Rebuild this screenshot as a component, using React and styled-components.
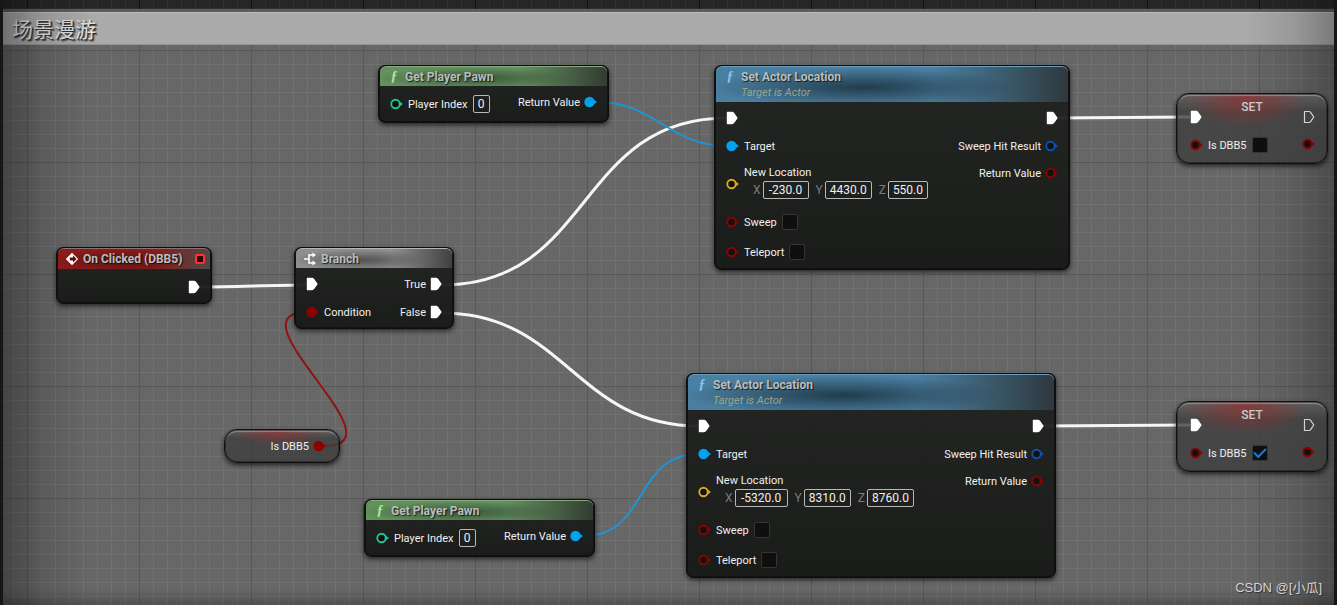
import React from "react";
import styled, { createGlobalStyle, css } from "styled-components";

const GlobalStyle = createGlobalStyle`
  * { box-sizing: border-box; }
  body {
    margin: 0;
    background: #1a1a1a;
    font-family: Roboto, "Noto Sans CJK SC", sans-serif;
  }
`;

const grid = (minor, major, x, y) => css`
  background-image:
    linear-gradient(to right, ${major} 1px, transparent 1px),
    linear-gradient(to bottom, ${major} 1px, transparent 1px),
    linear-gradient(to right, ${minor} 1px, transparent 1px),
    linear-gradient(to bottom, ${minor} 1px, transparent 1px);
  background-size: 112px 112px, 112px 112px, 14px 14px, 14px 14px;
  background-position: ${x}px ${y}px;
`;

const Canvas = styled.main`
  position: relative;
  display: flex;
  flex-direction: column;
  min-height: 100vh;
  padding: 9px 3px 0;
  overflow: hidden;
  background-color: #262626;
  ${grid("#303030", "#121212", 27, 50)}
`;

const Comment = styled.section`
  flex: 1;
  display: flex;
  flex-direction: column;
  padding-top: 3px;
  background: #5c5c5c;
`;

const CommentTitle = styled.h1`
  margin: 0;
  height: 33px;
  padding-left: 9px;
  border-top: 1px solid #bcbcbc;
  border-bottom: 1px solid #959595;
  background: #aaaaaa;
  color: #e2e2e2;
  font: 400 21px/31px "Noto Sans CJK SC", sans-serif;
  text-shadow: 1px 1px 1px #222, 2px 2px 1px #555;
`;

const CommentBody = styled.div`
  flex: 1;
  background-color: #676767;
  ${grid("#717171", "#585858", 24, 5)}
`;

const Vignette = styled.div`
  position: absolute;
  inset: 0;
  pointer-events: none;
  border: solid #161616;
  border-width: 0 3px;
  background:
    linear-gradient(to right, rgba(0, 0, 0, 0.34), rgba(0, 0, 0, 0.12) 40px, transparent 90px),
    linear-gradient(to left, rgba(0, 0, 0, 0.28), rgba(0, 0, 0, 0.1) 40px, transparent 90px),
    linear-gradient(to top, rgba(0, 0, 0, 0.22), transparent 16px);
`;

const Wires = styled.svg`
  position: absolute;
  inset: 0;
  width: 100%;
  height: 100%;
  fill: none;
`;

const placed = css`
  position: absolute;
  left: ${(p) => p.$x}px;
  top: ${(p) => p.$y}px;
  width: ${(p) => p.$w}px;
`;

const Node = styled.article`
  ${placed}
  border: 1px solid #0c0d0c;
  border-radius: 7px;
  overflow: hidden;
  background: linear-gradient(rgba(32, 34, 32, 0.94), rgba(23, 25, 23, 0.96));
  box-shadow: 0 2px 5px rgba(0, 0, 0, 0.65), inset 0 0 0 1px #111211;
`;

const tones = {
  green: { base: "#64905e", dark: "#39553a", end: "#333c33", line: "#86ab80" },
  blue: { base: "#4b7fa1", dark: "#213c4c", end: "#2e393e", line: "#6a9fc2" },
  red: { base: "#8c1a1a", dark: "#541616", end: "#4c4848", line: "#8a7272" },
  gray: { base: "#8f8f8f", dark: "#525252", end: "#404040", line: "#b5b5b5" },
};

const Header = styled.header`
  height: ${(p) => p.$h}px;
  margin: 0 1px;
  padding: 2px 5px 0 7px;
  display: flex;
  align-items: flex-start;
  gap: 4px;
  border-top: 1px solid ${(p) => tones[p.$tone].line};
  border-radius: 6px 6px 0 0;
  background:
    radial-gradient(ellipse 44% 56% at 42% 58%, ${(p) => tones[p.$tone].dark}, transparent),
    linear-gradient(to right, transparent 62%, ${(p) => tones[p.$tone].end} 100%),
    ${(p) => tones[p.$tone].base};
`;

const HeaderIcon = styled.span`
  flex: none;
  width: 14px;
  height: 16px;
  display: grid;
  place-items: center;
  color: ${(p) => p.$color};
  font: italic 700 14px/16px "Liberation Serif", serif;
`;

const Titles = styled.div`
  flex: 1;
  white-space: nowrap;
`;

const Title = styled.h2`
  margin: 0;
  color: #b9bdbc;
  font-size: 12px;
  font-weight: 700;
  line-height: 16px;
  text-shadow: 1px 1px 1px rgba(0, 0, 0, 0.7);
`;

const Subtitle = styled.p`
  margin: 0;
  color: #98a68c;
  font-size: 11px;
  font-style: italic;
  line-height: 15px;
`;

const Delegate = styled.span`
  flex: none;
  width: 10px;
  height: 10px;
  margin-top: 3px;
  border: 2px solid #ff3030;
  border-radius: 2px;
  background: #2a0505;
`;

const Body = styled.div`
  display: flex;
  justify-content: space-between;
  padding: ${(p) => p.$top}px 11px ${(p) => p.$bottom}px;
`;

const Column = styled.div`
  display: flex;
  flex-direction: column;
  align-items: ${(p) => (p.$out ? "flex-end" : "flex-start")};
`;

const Row = styled.div`
  display: flex;
  align-items: center;
  gap: ${(p) => p.$gap || 4}px;
  height: ${(p) => p.$h || 28}px;
  color: #f0f0f0;
  font-size: 11px;
  line-height: 17px;
  white-space: nowrap;
`;

const Field = styled.label`
  display: flex;
  align-items: center;
  gap: 5px;
`;

const TextBox = styled.input`
  width: ${(p) => p.$w}px;
  height: 18px;
  padding: 0;
  border: 1px solid #b8b8b8;
  border-radius: 2px;
  background: transparent;
  color: #f0f0f0;
  font: 400 12px/16px Roboto, sans-serif;
  text-align: center;
`;

const CheckBox = styled.input`
  appearance: none;
  display: grid;
  place-items: center;
  width: 16px;
  height: 16px;
  margin: 0;
  border: 1px solid #343634;
  border-radius: 2px;
  background: #0f0f0f;
  &:checked::after {
    content: "";
    width: 10px;
    height: 5px;
    margin-bottom: 3px;
    border: solid #1478ea;
    border-width: 0 0 2px 2px;
    transform: rotate(-45deg);
  }
`;

const Vector = styled.fieldset`
  margin: 0;
  padding: 0 0 4px;
  border: 0;
`;

const VectorName = styled.div`
  height: 17px;
`;

const Axes = styled.div`
  display: flex;
  gap: 7px;
  padding-left: 9px;
`;

const Axis = styled.label`
  display: flex;
  align-items: center;
  gap: 2px;
  color: #7c7c7c;
  font-size: 12px;
  line-height: 18px;
`;

const CompactNode = styled.article`
  ${placed}
  display: grid;
  border: 1px solid #101010;
  border-radius: 13px;
  background:
    radial-gradient(ellipse 42% 42% at 46% 6%, rgba(150, 45, 45, 0.7), transparent),
    linear-gradient(rgba(95, 95, 95, 0.75), rgba(62, 62, 62, 0.8) 25%, rgba(56, 56, 56, 0.72));
  box-shadow:
    0 2px 5px rgba(0, 0, 0, 0.7),
    inset 0 0 0 1px rgba(20, 20, 20, 0.5),
    inset 0 2px 1px rgba(220, 220, 220, 0.4);
  & > * { grid-area: 1 / 1; }
`;

const CompactTitle = styled.h2`
  justify-self: center;
  margin: 5px 0 0;
  color: #c9c9c9;
  font-size: 12px;
  font-weight: 500;
  line-height: 16px;
`;

const CompactBody = styled(Body)`
  padding: 9px 12px 4px 13px;
`;

const Getter = styled(CompactNode)`
  height: 34px;
  align-items: center;
  justify-items: end;
  padding-right: 13px;
`;

const Watermark = styled.p`
  position: absolute;
  right: 15px;
  bottom: 8px;
  margin: 0;
  color: #d4d4d4;
  font: 400 13px/18px "Liberation Sans", "Noto Sans CJK SC", sans-serif;
  text-shadow: 1px 1px 1px #333;
`;

const colors = {
  object: "#00a2f0",
  int: "#1fc493",
  bool: "#8f0000",
  vector: "#dba81c",
  struct: "#0a50ad",
};

function Exec({ empty }) {
  return (
    <svg width="12" height="14" viewBox="0 0 12 14" aria-hidden="true">
      <path
        d="M1.5 1.5H6Q7 1.5 7.6 2.3L10.8 7L7.6 11.7Q7 12.5 6 12.5H1.5Z"
        fill={empty ? "none" : "#fff"}
        stroke={empty ? "#d5d5d5" : "#fff"}
        strokeWidth={empty ? 1.2 : 1.4}
        strokeLinejoin="round"
      />
    </svg>
  );
}

function Pin({ type, linked }) {
  const c = colors[type];
  return (
    <svg width="13" height="12" viewBox="0 0 13 12" aria-hidden="true">
      <path d="M8.5 2.8L13 6L8.5 9.2Z" fill={c} />
      <circle cx="5.5" cy="6" r="4.2" fill={linked ? c : "#101210"} stroke={c} strokeWidth="1.9" />
    </svg>
  );
}

function Wire({ from, to, color = "#f6f6f6", width = 2 }) {
  const dx = to[0] - from[0];
  const dy = Math.abs(to[1] - from[1]);
  const reach = dx >= 0 ? (dx + dy) / 3 : (-3 * dx + 1.5 * dy) / 3;
  const d = `M${from} C${from[0] + reach} ${from[1]} ${to[0] - reach} ${to[1]} ${to}`;
  return <path d={d} stroke={color} strokeWidth={width} />;
}

function FunctionIcon({ color }) {
  return <HeaderIcon $color={color} aria-hidden="true">ƒ</HeaderIcon>;
}

function GetPlayerPawn({ x, y }) {
  return (
    <Node $x={x} $y={y} $w={231}>
      <Header $tone="green" $h={20}>
        <FunctionIcon color="#a5ec98" />
        <Titles><Title>Get Player Pawn</Title></Titles>
      </Header>
      <Body $top={4} $bottom={4}>
        <Column>
          <Row $gap={5}>
            <Pin type="int" />
            <Field>Player Index<TextBox $w={17} defaultValue="0" /></Field>
          </Row>
        </Column>
        <Column $out>
          <Row $h={24}>Return Value<Pin type="object" linked /></Row>
        </Column>
      </Body>
    </Node>
  );
}

function SetActorLocation({ x, y, w, axes }) {
  return (
    <Node $x={x} $y={y} $w={w}>
      <Header $tone="blue" $h={36}>
        <FunctionIcon color="#7cc8f5" />
        <Titles>
          <Title>Set Actor Location</Title>
          <Subtitle>Target is Actor</Subtitle>
        </Titles>
      </Header>
      <Body $top={2} $bottom={2}>
        <Column>
          <Row><Exec /></Row>
          <Row $gap={5}><Pin type="object" linked />Target</Row>
          <Row $gap={5} $h={47}>
            <Pin type="vector" />
            <Vector aria-label="New Location">
              <VectorName>New Location</VectorName>
              <Axes>
                {axes.map(([name, value, width]) => (
                  <Axis key={name}>{name}<TextBox $w={width} defaultValue={value} /></Axis>
                ))}
              </Axes>
            </Vector>
          </Row>
          <Row $gap={5} $h={30}><Pin type="bool" /><Field>Sweep<CheckBox type="checkbox" /></Field></Row>
          <Row $gap={5} $h={30}><Pin type="bool" /><Field>Teleport<CheckBox type="checkbox" /></Field></Row>
        </Column>
        <Column $out>
          <Row><Exec /></Row>
          <Row>Sweep Hit Result<Pin type="struct" /></Row>
          <Row $h={26}>Return Value<Pin type="bool" /></Row>
        </Column>
      </Body>
    </Node>
  );
}

function SetVariable({ x, y, checked }) {
  return (
    <CompactNode $x={x} $y={y} $w={152}>
      <CompactTitle>SET</CompactTitle>
      <CompactBody>
        <Column>
          <Row><Exec /></Row>
          <Row $gap={5}>
            <Pin type="bool" />
            <Field>Is DBB5<CheckBox type="checkbox" defaultChecked={checked} /></Field>
          </Row>
        </Column>
        <Column $out>
          <Row><Exec empty /></Row>
          <Row $h={26}><Pin type="bool" /></Row>
        </Column>
      </CompactBody>
    </CompactNode>
  );
}

export default function App() {
  return (
    <Canvas>
      <GlobalStyle />
      <Comment>
        <CommentTitle>场景漫游</CommentTitle>
        <CommentBody />
      </Comment>
      <Vignette />
      <Wires aria-hidden="true">
        <Wire from={[200, 287]} to={[307, 285]} width={3} />
        <Wire from={[442, 285]} to={[727, 118]} width={3} />
        <Wire from={[442, 313]} to={[699, 426]} width={3} />
        <Wire from={[1057, 118]} to={[1190, 117]} width={3} />
        <Wire from={[1043, 426]} to={[1190, 425]} width={3} />
        <Wire from={[597, 102]} to={[727, 146]} color="#1c96d4" />
        <Wire from={[583, 536]} to={[699, 454]} color="#1c96d4" />
        <Wire from={[324, 446]} to={[308, 312]} color="#8e1414" />
      </Wires>

      <Node $x={56} $y={247} $w={156}>
        <Header $tone="red" $h={21}>
          <HeaderIcon>
            <svg width="14" height="14" viewBox="0 0 14 14" aria-hidden="true">
              <path d="M7 .8L13.2 7L7 13.2L.8 7Z" fill="#fff" />
              <path d="M8 3.4L11.6 7L8 10.6V8.4H4.8V5.6H8Z" fill="#5a1010" />
            </svg>
          </HeaderIcon>
          <Titles><Title>On Clicked (DBB5)</Title></Titles>
          <Delegate />
        </Header>
        <Body $top={4} $bottom={2}>
          <Column />
          <Column $out><Row><Exec /></Row></Column>
        </Body>
      </Node>

      <Node $x={294} $y={247} $w={160}>
        <Header $tone="gray" $h={20}>
          <HeaderIcon>
            <svg width="14" height="14" viewBox="0 0 14 14" fill="none" aria-hidden="true">
              <path d="M1 7H6M11 3H6V11H11" stroke="#fff" strokeWidth="1.6" />
              <path d="M9.5 .5L13 3L9.5 5.5ZM9.5 8.5L13 11L9.5 13.5Z" fill="#fff" />
            </svg>
          </HeaderIcon>
          <Titles><Title>Branch</Title></Titles>
        </Header>
        <Body $top={2} $bottom={2}>
          <Column>
            <Row><Exec /></Row>
            <Row $gap={5}><Pin type="bool" linked />Condition</Row>
          </Column>
          <Column $out>
            <Row>True<Exec /></Row>
            <Row>False<Exec /></Row>
          </Column>
        </Body>
      </Node>

      <GetPlayerPawn x={378} y={65} />
      <GetPlayerPawn x={364} y={499} />
      <SetActorLocation
        x={714}
        y={65}
        w={356}
        axes={[["X", "-230.0", 46], ["Y", "4430.0", 47], ["Z", "550.0", 40]]}
      />
      <SetActorLocation
        x={686}
        y={373}
        w={370}
        axes={[["X", "-5320.0", 53], ["Y", "8310.0", 47], ["Z", "8760.0", 47]]}
      />
      <SetVariable x={1176} y={93} />
      <SetVariable x={1176} y={401} checked />
      <Getter $x={224} $y={429} $w={116}>
        <Row>Is DBB5<Pin type="bool" linked /></Row>
      </Getter>

      <Watermark>CSDN @[小瓜]</Watermark>
    </Canvas>
  );
}
